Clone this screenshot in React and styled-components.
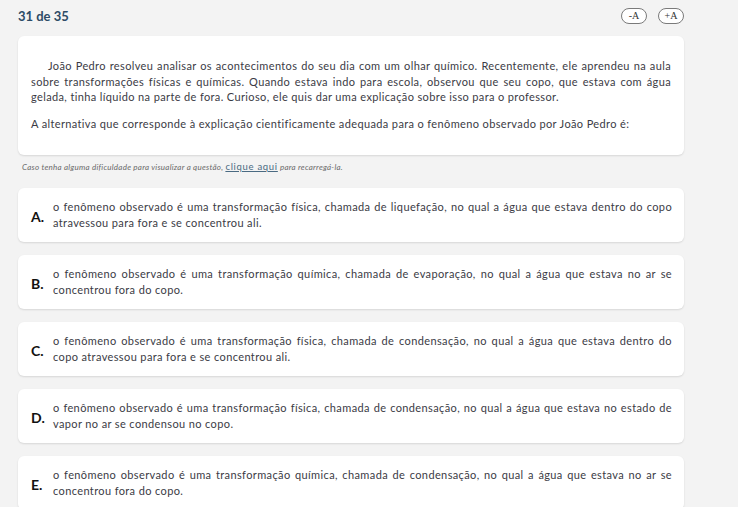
import React from 'react';
import styled, { createGlobalStyle } from 'styled-components';

const GlobalStyle = createGlobalStyle`
  html, body {
    margin: 0;
    padding: 0;
    background: #f3f3f3;
  }
  body {
    font-family: Lato, "Open Sans", sans-serif;
    color: #3b3b45;
  }
`;

const Page = styled.div`
  width: 666px;
  margin-left: 18px;
`;

const TopBar = styled.div`
  height: 36px;
  display: flex;
  align-items: flex-start;
  justify-content: space-between;
`;

const Counter = styled.h2`
  margin: 8px 0 0;
  font-size: 13px;
  font-weight: 700;
  color: #2c4b66;
`;

const FontTools = styled.div`
  display: flex;
  gap: 11px;
  margin-top: 8px;
`;

const FontButton = styled.button`
  width: 26px;
  height: 16px;
  padding: 0;
  border: 1px solid #7a7a7a;
  border-radius: 8px;
  background: #fff;
  font-family: "Liberation Serif", serif;
  font-size: 10px;
  line-height: 14px;
  color: #333;
`;

const Card = styled.div`
  background: #fff;
  border-radius: 6px;
  box-shadow: 0 1px 2px rgba(0, 0, 0, 0.12);
`;

const Statement = styled(Card)`
  padding: 22px 13px 24px;
`;

const Paragraph = styled.p`
  margin: 0 0 11px;
  font-size: 11px;
  line-height: 15.5px;
  letter-spacing: 0.37px;
  text-align: justify;
  text-indent: ${(p) => (p.$indent ? '17px' : '0')};
  &:last-child {
    margin-bottom: 0;
  }
`;

const Note = styled.p`
  margin: 6px 0 0 4px;
  height: 27px;
  font-size: 8px;
  letter-spacing: 0.25px;
  font-style: italic;
  color: #6a6a6a;
`;

const NoteLink = styled.a`
  font-size: 9.5px;
  font-style: normal;
  color: #4a6a82;
  letter-spacing: 0.7px;
  text-decoration: underline;
`;

const Options = styled.div`
  display: flex;
  flex-direction: column;
  gap: 13px;
`;

const Option = styled(Card)`
  height: 54px;
  box-sizing: border-box;
  display: flex;
  align-items: center;
  padding: 0 12px 0 13px;
`;

const Letter = styled.span`
  width: 22px;
  flex: none;
  margin-top: 2px;
  font-size: 14px;
  font-weight: 700;
  color: #111;
`;

const OptionText = styled.p`
  margin: 0;
  font-size: 11px;
  line-height: 16px;
  letter-spacing: 0.38px;
  text-align: justify;
`;

const options = [
  ['A.', 'o fenômeno observado é uma transformação física, chamada de liquefação, no qual a água que estava dentro do copo atravessou para fora e se concentrou ali.'],
  ['B.', 'o fenômeno observado é uma transformação química, chamada de evaporação, no qual a água que estava no ar se concentrou fora do copo.'],
  ['C.', 'o fenômeno observado é uma transformação física, chamada de condensação, no qual a água que estava dentro do copo atravessou para fora e se concentrou ali.'],
  ['D.', 'o fenômeno observado é uma transformação física, chamada de condensação, no qual a água que estava no estado de vapor no ar se condensou no copo.'],
  ['E.', 'o fenômeno observado é uma transformação química, chamada de condensação, no qual a água que estava no ar se concentrou fora do copo.'],
];

export default function App() {
  return (
    <>
      <GlobalStyle />
      <Page>
        <TopBar>
          <Counter>31 de 35</Counter>
          <FontTools>
            <FontButton>-A</FontButton>
            <FontButton>+A</FontButton>
          </FontTools>
        </TopBar>

        <Statement>
          <Paragraph $indent>
            João Pedro resolveu analisar os acontecimentos do seu dia com um olhar químico. Recentemente, ele aprendeu na aula sobre transformações físicas e químicas. Quando estava indo para escola, observou que seu copo, que estava com água gelada, tinha líquido na parte de fora. Curioso, ele quis dar uma explicação sobre isso para o professor.
          </Paragraph>
          <Paragraph>
            A alternativa que corresponde à explicação cientificamente adequada para o fenômeno observado por João Pedro é:
          </Paragraph>
        </Statement>

        <Note>
          Caso tenha alguma dificuldade para visualizar a questão, <NoteLink href="#">clique aqui</NoteLink> para recarregá-la.
        </Note>

        <Options>
          {options.map(([letter, text]) => (
            <Option key={letter}>
              <Letter>{letter}</Letter>
              <OptionText>{text}</OptionText>
            </Option>
          ))}
        </Options>
      </Page>
    </>
  );
}
